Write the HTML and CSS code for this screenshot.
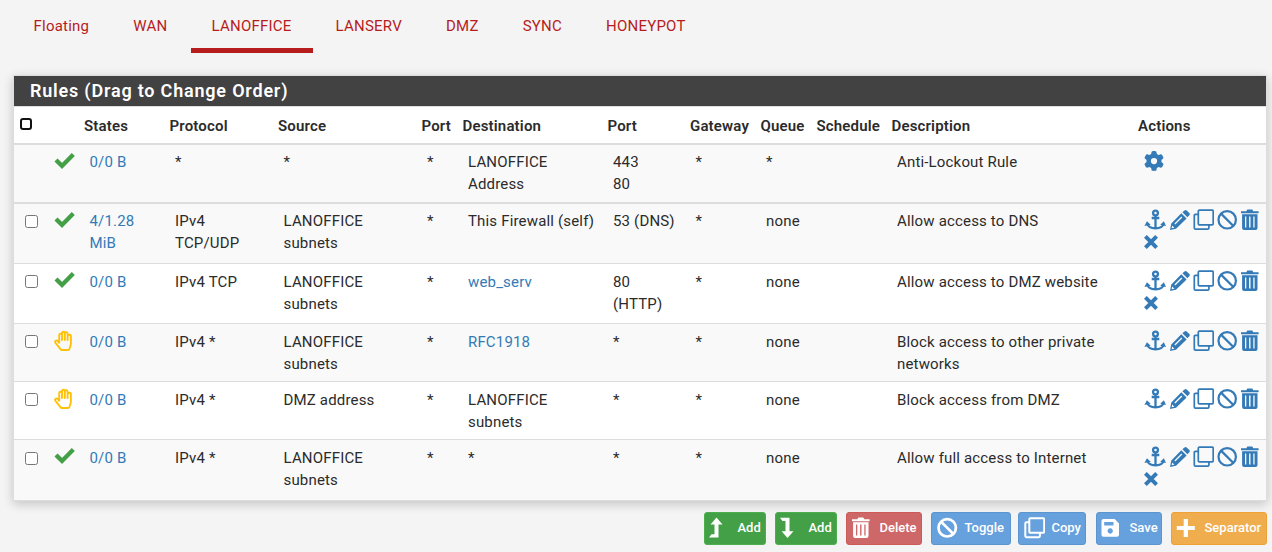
FILE: index.html
```
<!DOCTYPE html>
<html lang="en">
<head>
<meta charset="utf-8">
<title>Firewall Rules</title>
<link rel="stylesheet" href="styles.css">
</head>
<body>
<svg class="sprite" aria-hidden="true">
  <symbol id="check" viewBox="0 0 22 18"><path d="M2 8 8 13.9 19.3 2.6" fill="none" stroke="currentColor" stroke-width="4.3"/></symbol>
  <symbol id="hand" viewBox="0 0 20 22"><path d="M5.2 13.6V5.2c0-2 2.8-2 2.8 0V10 3.4c0-2.2 2.8-2.2 2.8 0V10 3.8c0-2.2 2.8-2.2 2.8 0V10 6.2c0-2 3.3-2 3.3 0v7.4c0 2-1 3.3-1.3 5.1q-.2 1.3-1.4 1.3H8q-1 0-1.5-.8L1.5 13c-1.2-1.8 1-3.4 2.4-1.8l1.4 1.9" fill="none" stroke="currentColor" stroke-width="1.9" stroke-linejoin="round"/></symbol>
  <symbol id="gear" viewBox="0 0 512 512"><path fill="currentColor" d="M495.9 166.6c3.2 8.7 .5 18.4-6.4 24.6l-43.3 39.4c1.1 8.3 1.7 16.8 1.7 25.4s-.6 17.1-1.7 25.4l43.3 39.4c6.9 6.2 9.6 15.9 6.4 24.6c-4.4 11.9-9.7 23.3-15.8 34.3l-4.7 8.1c-6.6 11-14 21.4-22.1 31.2c-5.9 7.2-15.7 9.6-24.5 6.8l-55.7-17.7c-13.4 10.3-28.2 18.9-44 25.4l-12.5 57.1c-2 9.1-9 16.3-18.2 17.8c-13.8 2.3-28 3.5-42.5 3.5s-28.7-1.2-42.5-3.5c-9.2-1.5-16.2-8.7-18.2-17.8l-12.5-57.1c-15.8-6.5-30.6-15.1-44-25.4L83.1 425.9c-8.8 2.8-18.6 .3-24.5-6.8c-8.1-9.8-15.5-20.2-22.1-31.2l-4.7-8.1c-6.1-11-11.4-22.4-15.8-34.3c-3.2-8.7-.5-18.4 6.4-24.6l43.3-39.4C64.6 273.1 64 264.6 64 256s.6-17.1 1.7-25.4L22.4 191.2c-6.9-6.2-9.6-15.9-6.4-24.6c4.4-11.9 9.7-23.3 15.8-34.3l4.7-8.1c6.6-11 14-21.4 22.1-31.2c5.9-7.2 15.7-9.6 24.5-6.8l55.7 17.7c13.4-10.3 28.2-18.9 44-25.4l12.5-57.1c2-9.1 9-16.3 18.2-17.8C227.3 1.2 241.5 0 256 0s28.7 1.2 42.5 3.5c9.2 1.5 16.2 8.7 18.2 17.8l12.5 57.1c15.8 6.5 30.6 15.1 44 25.4l55.7-17.7c8.8-2.8 18.6-.3 24.5 6.8c8.1 9.8 15.5 20.2 22.1 31.2l4.7 8.1c6.1 11 11.4 22.4 15.8 34.3zM256 336a80 80 0 1 0 0-160 80 80 0 1 0 0 160z"/></symbol>
  <symbol id="anchor" viewBox="0 0 22 22"><g fill="none" stroke="currentColor" stroke-width="2.3"><circle cx="11.5" cy="4" r="2.4"/><path d="M11.5 6.5V19M7.7 9h7.6M3.3 14.8c.8 2.9 4 4.6 8.2 4.6s7.4-1.7 8.2-4.6"/></g><path d="M.4 17 2.9 12.2 6.7 15.8ZM22 17 19.9 12.2 16.2 15.8Z" fill="currentColor"/></symbol>
  <symbol id="pencil" viewBox="0 0 22 22"><path fill="currentColor" fill-rule="evenodd" d="M2 21 3.3 14.5 13.3 4.2 18.6 9.4 8 19.7ZM6.4 14.5l.9.9 7-7-.9-.9ZM4.2 16.5l-.6 2.8 2.8-.6Z"/><path fill="currentColor" d="m14.4 3.3 2.1-1.9q1.1-1 2.2 0l2.6 2.6q1.1 1.1 0 2.2l-1.9 2.1Z"/></symbol>
  <symbol id="clone" viewBox="0 0 22 22"><g fill="none" stroke="currentColor"><rect x="6.3" y="1.2" width="14.9" height="14.6" rx="1"/><path d="M6.2 5.3H3.4q-1.1 0-1.1 1.1v12.7q0 1.1 1.1 1.1h12.4q1.1 0 1.1-1.1v-3"/></g></symbol>
  <symbol id="ban" viewBox="0 0 22 22"><g fill="none" stroke="currentColor"><circle cx="11.2" cy="10.8" r="8.7"/><path d="m5 4.6 12.4 12.4"/></g></symbol>
  <symbol id="trash" viewBox="0 0 22 22"><path fill="currentColor" fill-rule="evenodd" d="M1 2.2H6.3L7.3.6h5L13.3 2.2h5.3V4.3H1ZM2.1 5.3H17.5V19q0 2-2 2H4.1q-2 0-2-2ZM5 7.6V18.6H6.3V7.6ZM9.1 7.6V18.6h1.4V7.6ZM13.3 7.6V18.6h1.3V7.6Z"/></symbol>
  <symbol id="times" viewBox="0 0 14 14"><path d="m1.4 1.4 11.2 11.2m0-11.2L1.4 12.6" fill="none" stroke="currentColor" stroke-width="3.9"/></symbol>
  <symbol id="up" viewBox="0 0 14 22"><path fill="currentColor" d="M0 20.5 2.5 17.3H5.5V7.5H1.5L7.5.5l6 7H9.5V20.5Z"/></symbol>
  <symbol id="down" viewBox="0 0 14 22"><path fill="currentColor" d="M0 .8H9.5V14.2H13.5L7.5 21 1.6 14.2H5.5V4H2.5Z"/></symbol>
  <symbol id="save" viewBox="0 0 22 22"><path fill="currentColor" fill-rule="evenodd" d="M3 2H13.7L18 6.4V17.8q0 2-2 2H2.5q-2 0-2-2V4q0-2 2-2ZM3.2 4.9V8.6H12.5V4.9ZM9.2 11.3a2.7 2.7 0 1 0 .01 0Z"/></symbol>
  <symbol id="plus" viewBox="0 0 22 22"><path d="M9.8 2V20M.8 11h18" fill="none" stroke="currentColor" stroke-width="4.2"/></symbol>
</svg>

<nav class="tabs">
  <a>Floating</a><a>WAN</a><a class="active">LANOFFICE</a><a>LANSERV</a><a>DMZ</a><a>SYNC</a><a>HONEYPOT</a>
</nav>

<section class="panel">
  <h2>Rules (Drag to Change Order)</h2>
  <table>
    <colgroup><col class="c-check"><col class="c-icon"><col class="c-states"><col class="c-proto"><col class="c-source"><col class="c-sport"><col class="c-dest"><col class="c-dport"><col class="c-gateway"><col class="c-queue"><col class="c-sched"><col class="c-desc"><col></colgroup>
    <thead>
      <tr><th><span class="check-all"></span></th><th></th><th>States</th><th>Protocol</th><th>Source</th><th>Port</th><th>Destination</th><th>Port</th><th>Gateway</th><th>Queue</th><th>Schedule</th><th>Description</th><th>Actions</th></tr>
    </thead>
    <tbody>
      <tr class="lockout"><td></td><td class="state pass"><svg><use href="#check"/></svg></td><td><a>0/0 B</a></td><td>*</td><td>*</td><td>*</td><td>LANOFFICE Address</td><td>443<br>80</td><td>*</td><td>*</td><td></td><td>Anti-Lockout Rule</td><td><div class="actions"><svg class="gear"><use href="#gear"/></svg></div></td></tr>
      <tr class="tall first"><td class="sel"><input type="checkbox"></td><td class="state pass"><svg><use href="#check"/></svg></td><td><a>4/1.28 MiB</a></td><td>IPv4 TCP/UDP</td><td>LANOFFICE subnets</td><td>*</td><td>This Firewall (self)</td><td>53 (DNS)</td><td>*</td><td>none</td><td></td><td>Allow access to DNS</td><td><div class="actions"><svg><use href="#anchor"/></svg><svg><use href="#pencil"/></svg><svg class="clone"><use href="#clone"/></svg><svg class="ban"><use href="#ban"/></svg><svg><use href="#trash"/></svg><svg class="times"><use href="#times"/></svg></div></td></tr>
      <tr class="tall"><td class="sel"><input type="checkbox"></td><td class="state pass"><svg><use href="#check"/></svg></td><td><a>0/0 B</a></td><td>IPv4 TCP</td><td>LANOFFICE subnets</td><td>*</td><td><a>web_serv</a></td><td>80 (HTTP)</td><td>*</td><td>none</td><td></td><td>Allow access to DMZ website</td><td><div class="actions"><svg><use href="#anchor"/></svg><svg><use href="#pencil"/></svg><svg class="clone"><use href="#clone"/></svg><svg class="ban"><use href="#ban"/></svg><svg><use href="#trash"/></svg><svg class="times"><use href="#times"/></svg></div></td></tr>
      <tr><td class="sel"><input type="checkbox"></td><td class="state block"><svg><use href="#hand"/></svg></td><td><a>0/0 B</a></td><td>IPv4 *</td><td>LANOFFICE subnets</td><td>*</td><td><a>RFC1918</a></td><td>*</td><td>*</td><td>none</td><td></td><td>Block access to other private networks</td><td><div class="actions"><svg><use href="#anchor"/></svg><svg><use href="#pencil"/></svg><svg class="clone"><use href="#clone"/></svg><svg class="ban"><use href="#ban"/></svg><svg><use href="#trash"/></svg></div></td></tr>
      <tr><td class="sel"><input type="checkbox"></td><td class="state block"><svg><use href="#hand"/></svg></td><td><a>0/0 B</a></td><td>IPv4 *</td><td>DMZ address</td><td>*</td><td>LANOFFICE subnets</td><td>*</td><td>*</td><td>none</td><td></td><td>Block access from DMZ</td><td><div class="actions"><svg><use href="#anchor"/></svg><svg><use href="#pencil"/></svg><svg class="clone"><use href="#clone"/></svg><svg class="ban"><use href="#ban"/></svg><svg><use href="#trash"/></svg></div></td></tr>
      <tr class="last"><td class="sel"><input type="checkbox"></td><td class="state pass"><svg><use href="#check"/></svg></td><td><a>0/0 B</a></td><td>IPv4 *</td><td>LANOFFICE subnets</td><td>*</td><td>*</td><td>*</td><td>*</td><td>none</td><td></td><td>Allow full access to Internet</td><td><div class="actions"><svg><use href="#anchor"/></svg><svg><use href="#pencil"/></svg><svg class="clone"><use href="#clone"/></svg><svg class="ban"><use href="#ban"/></svg><svg><use href="#trash"/></svg><svg class="times"><use href="#times"/></svg></div></td></tr>
    </tbody>
  </table>
</section>

<div class="buttons">
  <button class="btn add"><svg class="narrow"><use href="#up"/></svg><span>Add</span></button>
  <button class="btn add"><svg class="narrow"><use href="#down"/></svg><span>Add</span></button>
  <button class="btn delete"><svg><use href="#trash"/></svg><span>Delete</span></button>
  <button class="btn info toggle"><svg class="ban"><use href="#ban"/></svg><span>Toggle</span></button>
  <button class="btn info copy"><svg class="clone"><use href="#clone"/></svg><span>Copy</span></button>
  <button class="btn info save"><svg><use href="#save"/></svg><span>Save</span></button>
  <button class="btn separator"><svg><use href="#plus"/></svg><span>Separator</span></button>
</div>
</body>
</html>
```
FILE: styles.css
```
* { box-sizing: border-box; }
body {
  margin: 0;
  height: 552px;
  overflow: hidden;
  background: #f4f4f4;
  color: #2b2b2b;
  font: 15px/22px Roboto, sans-serif;
  letter-spacing: 0.17px;
}
.sprite { display: none; }
svg { display: block; flex: none; }
.clone { stroke-width: 1.7px; }
.ban { stroke-width: 2.2px; }

.tabs { display: flex; gap: 2px; padding-left: 12.5px; height: 75px; letter-spacing: 0.22px; }
.tabs a {
  height: 53px;
  padding: 15px 21.1px 0 21px;
  border-bottom: 5px solid transparent;
  color: #b71c1c;
  white-space: nowrap;
}
.tabs .active { border-color: #b71c1c; }

.panel {
  width: 1254px;
  height: 426px;
  margin-left: 13px;
  border: 1px solid #ddd;
  background: #fff;
  box-shadow: 0 3px 10px rgba(0, 0, 0, .2);
}
.panel h2 {
  height: 30px;
  margin: 0;
  padding-left: 16px;
  background: #424242;
  color: #fff;
  font-size: 18px;
  font-weight: 600;
  line-height: 30px;
  letter-spacing: 0.8px;
}
table { width: 1252px; table-layout: fixed; border-collapse: separate; border-spacing: 0; border-top: 1px solid #ddd; }
.c-check { width: 30px; }
.c-icon { width: 35.5px; }
.c-states { width: 85.5px; }
.c-proto { width: 108.5px; }
.c-source { width: 143.5px; }
.c-sport { width: 41px; }
.c-dest { width: 145px; }
.c-dport { width: 82.5px; }
.c-gateway { width: 70.5px; }
.c-queue { width: 56px; }
.c-sched { width: 75px; }
.c-desc { width: 246.5px; }
th {
  height: 38px;
  padding: 1px 0 0 4.5px;
  border-bottom: 2px solid #ddd;
  text-align: left;
  font-weight: 600;
  white-space: nowrap;
}
.check-all { display: block; width: 12px; height: 12px; margin: -3px 0 0 1px; border: 2px solid #111; border-radius: 3px; }
td { height: 58px; padding: 7px 5px 5px 10px; border-bottom: 1px solid #ddd; vertical-align: top; }
.lockout td { height: 59px; padding-top: 6px; border-bottom-width: 2px; }
.tall td { height: 60px; }
.first td { padding-top: 6px; }
.last td { height: 60px; border: 0; }
tbody tr:nth-child(-n+2), tbody tr:nth-child(4), tbody tr:nth-child(6) { background: #f9f9f9; }
td a { color: #337ab7; }
td.sel { padding: 11px 0 0 11px; }
.last td.sel { padding-top: 12px; }
.sel input { display: block; width: 13px; height: 13px; margin: 0; }
td.state { padding: 7px 0 0 10px; }
td.state.block { padding-top: 6px; }
.pass svg { width: 22px; height: 18px; color: #43a047; }
.block svg { width: 20px; height: 22px; color: #ffc107; }
.actions { display: flex; flex-wrap: wrap; gap: 4px 2px; width: 118px; margin: -1px 0 -10px .5px; color: #337ab7; }
.actions svg { width: 22px; height: 22px; }
.actions .gear { width: 20px; height: 20px; margin-top: 1px; }
.actions .times { width: 14px; height: 14px; }

.buttons { display: flex; gap: 9px; padding: 11px 0 0 704px; }
.btn {
  display: flex;
  align-items: center;
  width: 62px;
  height: 33px;
  padding: 0 0 2px 4px;
  border: 1px solid;
  border-radius: 3px;
  color: #fff;
  font: 500 13px/20px Roboto, sans-serif;
  white-space: nowrap;
}
.btn svg { width: 22px; height: 22px; margin-right: 6.5px; }
.btn .narrow { width: 14px; margin: 0 14.5px 0 0; }
.btn .ban { stroke-width: 2.7px; }
.btn .clone { stroke-width: 2px; }
.add { background: #43a047; border-color: #4cae4c; }
.delete { width: 76px; background: #cd6768; border-color: #cb5a59; }
.info { background: #67a1dd; border-color: #5b95cf; }
.toggle { width: 80px; }
.copy { width: 68px; margin-left: -2px; }
.save { width: 66px; margin-left: 1px; }
.separator { width: 96px; background: #f0ad4e; border-color: #eea236; }
```
